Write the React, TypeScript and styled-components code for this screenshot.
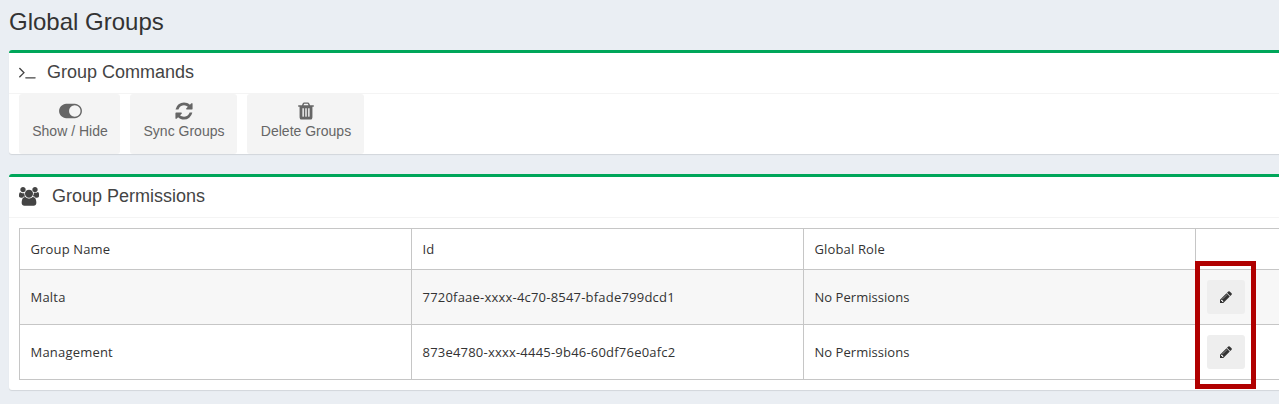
import React from "react";
import styled, { createGlobalStyle } from "styled-components";

const GlobalStyle = createGlobalStyle`
  * { box-sizing: border-box; }
  body {
    margin: 0;
    background: #eaeef3;
    overflow: hidden;
    font-family: "Liberation Sans", Arial, sans-serif;
  }
`;

const Page = styled.main`
  height: 404px;
  padding-left: 9px;
  overflow: hidden;
`;

const PageTitle = styled.h1`
  margin: 0;
  height: 50px;
  padding-top: 8px;
  font-size: 24px;
  line-height: 28px;
  font-weight: 400;
  color: #333;
`;

const Panel = styled.section<{ $height: number }>`
  position: relative;
  width: 1290px;
  height: ${(p) => p.$height}px;
  margin-bottom: 20px;
  background: #fff;
  border-top: 3px solid #00a65a;
  border-radius: 3px;
  box-shadow: 0 1px 1px rgba(0, 0, 0, 0.1);
`;

const PanelHeader = styled.header<{ $gap: number }>`
  display: flex;
  align-items: center;
  gap: ${(p) => p.$gap}px;
  height: 41px;
  padding: 0 10px 2px;
  border-bottom: 1px solid #f4f4f4;
  color: #444;
`;

const PanelTitle = styled.h3`
  margin: 0;
  font-size: 18px;
  line-height: 20px;
  font-weight: 400;
`;

const Toolbar = styled.div`
  display: flex;
  gap: 10px;
  padding: 0 10px;
`;

const ToolButton = styled.button<{ $width: number }>`
  display: flex;
  flex-direction: column;
  align-items: center;
  width: ${(p) => p.$width}px;
  height: 60px;
  padding: 7px 0 0 1px;
  border: 0;
  border-radius: 3px;
  background: #f4f4f4;
  color: #666;
  font: 14px/20px "Liberation Sans", Arial, sans-serif;
  white-space: nowrap;
`;

const Glyph = styled.svg`
  display: block;
  flex: none;
  fill: currentColor;
`;

const Table = styled.div`
  width: 1300px;
  margin: 10px 0 0 10px;
  border: 1px solid #c6c6c6;
  border-bottom: 0;
`;

const Row = styled.div<{ $height: number; $shaded?: boolean }>`
  display: grid;
  grid-template-columns: 392px 392px 392px 1fr;
  height: ${(p) => p.$height}px;
  border-bottom: 1px solid #c6c6c6;
  background: ${(p) => (p.$shaded ? "#f7f7f7" : "#fff")};
`;

const Cell = styled.div<{ $spacing?: number }>`
  display: flex;
  align-items: center;
  padding: 0 10px 0 10.5px;
  border-right: 1px solid #c6c6c6;
  color: #333;
  font-family: "Open Sans", "Noto Sans", sans-serif;
  font-size: 13px;
  letter-spacing: ${(p) => p.$spacing ?? 0}px;
`;

const ActionCell = styled(Cell)`
  padding-left: 11px;
`;

const EditButton = styled.button`
  display: flex;
  align-items: center;
  justify-content: center;
  width: 38px;
  height: 34px;
  padding: 0 1px 0 0;
  border: 0;
  border-radius: 3px;
  background: #eee;
  color: #333;
`;

const Highlight = styled.div`
  position: absolute;
  left: 1186px;
  top: 84px;
  width: 61px;
  height: 128px;
  border: 5px solid #b00000;
  pointer-events: none;
`;

const TerminalIcon = () => (
  <Glyph width="19" height="18" viewBox="77 0 1891 1792">
    <path d="M649 983l-466 466q-10 10-23 10t-23-10l-50-50q-10-10-10-23t10-23l393-393-393-393q-10-10-10-23t10-23l50-50q10-10 23-10t23 10l466 466q10 10 10 23t-10 23zm1079 457v64q0 14-9 23t-23 9h-960q-14 0-23-9t-9-23v-64q0-14 9-23t23-9h960q14 0 23 9t9 23z" />
  </Glyph>
);

const ToggleIcon = () => (
  <Glyph width="23" height="20" viewBox="0 0 2048 1792">
    <path d="M0 896q0-130 51-248.5t136.5-204 204-136.5 248.5-51h768q130 0 248.5 51t204 136.5 136.5 204 51 248.5-51 248.5-136.5 204-204 136.5-248.5 51h-768q-130 0-248.5-51t-204-136.5-136.5-204-51-248.5zm1408 512q104 0 198.5-40.5t163.5-109.5 109.5-163.5 40.5-198.5-40.5-198.5-109.5-163.5-163.5-109.5-198.5-40.5-198.5 40.5-163.5 109.5-109.5 163.5-40.5 198.5 40.5 198.5 109.5 163.5 163.5 109.5 198.5 40.5z" />
  </Glyph>
);

const RefreshIcon = () => (
  <Glyph width="20" height="20" viewBox="0 0 1792 1792">
    <path d="M1639 1056q0 5-1 7-64 268-268 434.5t-478 166.5q-146 0-282.5-55t-243.5-157l-129 129q-19 19-45 19t-45-19-19-45v-448q0-26 19-45t45-19h448q26 0 45 19t19 45-19 45l-137 137q71 66 161 102t187 36q134 0 250-65t186-179q11-17 53-117 8-23 30-23h192q13 0 22.5 9.5t9.5 22.5zm25-800v448q0 26-19 45t-45 19h-448q-26 0-45-19t-19-45 19-45l138-138q-148-137-349-137-134 0-250 65t-186 179q-11 17-53 117-8 23-30 23h-199q-13 0-22.5-9.5t-9.5-22.5v-7q65-268 270-434.5t480-166.5q146 0 284 55.5t245 156.5l130-129q19-19 45-19t45 19 19 45z" />
  </Glyph>
);

const TrashIcon = () => (
  <Glyph width="20" height="20" viewBox="0 0 1792 1792">
    <path d="M704 1376v-704q0-14-9-23t-23-9h-64q-14 0-23 9t-9 23v704q0 14 9 23t23 9h64q14 0 23-9t9-23zm256 0v-704q0-14-9-23t-23-9h-64q-14 0-23 9t-9 23v704q0 14 9 23t23 9h64q14 0 23-9t9-23zm256 0v-704q0-14-9-23t-23-9h-64q-14 0-23 9t-9 23v704q0 14 9 23t23 9h64q14 0 23-9t9-23zm-544-992h448l-48-117q-7-9-17-11h-317q-10 2-17 11zm928 32v64q0 14-9 23t-23 9h-96v948q0 83-47 143.5t-113 60.5h-832q-66 0-113-58.5t-47-141.5v-952h-96q-14 0-23-9t-9-23v-64q0-14 9-23t23-9h309l70-167q15-37 54-63t79-26h320q40 0 79 26t54 63l70 167h309q14 0 23 9t9 23z" />
  </Glyph>
);

const UsersIcon = () => (
  <Glyph width="20" height="19" viewBox="64 0 1920 1824">
    <path d="M657 896q-162 5-265 128h-134q-82 0-138-40.5t-56-118.5q0-353 124-353 6 0 43.5 21t97.5 42.5 119 21.5q67 0 133-23-5 37-5 66 0 159 93 290zm1071 637q0 120-73 189.5t-194 69.5h-874q-121 0-194-69.5t-73-189.5q0-53 3.5-103.5t14-109 26.5-108.5 43-97.5 62-81 85.5-53.5 111.5-20q10 0 43 21.5t73 48 107 48 135 21.5 135-21.5 107-48 73-48 43-21.5q61 0 111.5 20t85.5 53.5 62 81 43 97.5 26.5 108.5 14 109 3.5 103.5zm-1024-1277q0 106-75 181t-181 75-181-75-75-181 75-181 181-75 181 75 75 181zm704 384q0 159-112.5 271.5t-271.5 112.5-271.5-112.5-112.5-271.5 112.5-271.5 271.5-112.5 271.5 112.5 112.5 271.5zm576 225q0 78-56 118.5t-138 40.5h-134q-103-123-265-128 93-131 93-290 0-29-5-66 66 23 133 23 59 0 119-21.5t97.5-42.5 43.5-21q124 0 124 353zm-128-609q0 106-75 181t-181 75-181-75-75-181 75-181 181-75 181 75 75 181z" />
  </Glyph>
);

const PencilIcon = () => (
  <Glyph width="14" height="14" viewBox="0 0 1792 1792">
    <path d="M491 1536l91-91-235-235-91 91v107h128v128h107zm523-928q0-22-22-22-10 0-17 7l-542 542q-7 7-7 17 0 22 22 22 10 0 17-7l542-542q7-7 7-17zm-54-192l416 416-832 832h-416v-416zm683 96q0 53-37 90l-166 166-416-416 166-165q36-38 90-38 53 0 91 38l235 234q37 39 37 91z" />
  </Glyph>
);

const groups = [
  { name: "Malta", id: "7720faae-xxxx-4c70-8547-bfade799dcd1", role: "No Permissions" },
  { name: "Management", id: "873e4780-xxxx-4445-9b46-60df76e0afc2", role: "No Permissions" },
];

export default function App() {
  return (
    <>
      <GlobalStyle />
      <Page>
        <PageTitle>Global Groups</PageTitle>
        <Panel $height={104}>
          <PanelHeader $gap={9}>
            <TerminalIcon />
            <PanelTitle>Group Commands</PanelTitle>
          </PanelHeader>
          <Toolbar>
            <ToolButton $width={101}>
              <ToggleIcon />
              Show / Hide
            </ToolButton>
            <ToolButton $width={107}>
              <RefreshIcon />
              Sync Groups
            </ToolButton>
            <ToolButton $width={117}>
              <TrashIcon />
              Delete Groups
            </ToolButton>
          </Toolbar>
        </Panel>
        <Panel $height={216}>
          <PanelHeader $gap={13}>
            <UsersIcon />
            <PanelTitle>Group Permissions</PanelTitle>
          </PanelHeader>
          <Table>
            <Row $height={41}>
              <Cell $spacing={0.15}>Group Name</Cell>
              <Cell>Id</Cell>
              <Cell $spacing={0.15}>Global Role</Cell>
              <ActionCell />
            </Row>
            {groups.map((group, i) => (
              <Row key={group.id} $height={55} $shaded={i % 2 === 0}>
                <Cell $spacing={0.2}>{group.name}</Cell>
                <Cell $spacing={0.21}>{group.id}</Cell>
                <Cell $spacing={0.04}>{group.role}</Cell>
                <ActionCell>
                  <EditButton aria-label={`Edit ${group.name}`}>
                    <PencilIcon />
                  </EditButton>
                </ActionCell>
              </Row>
            ))}
          </Table>
          <Highlight />
        </Panel>
      </Page>
    </>
  );
}
